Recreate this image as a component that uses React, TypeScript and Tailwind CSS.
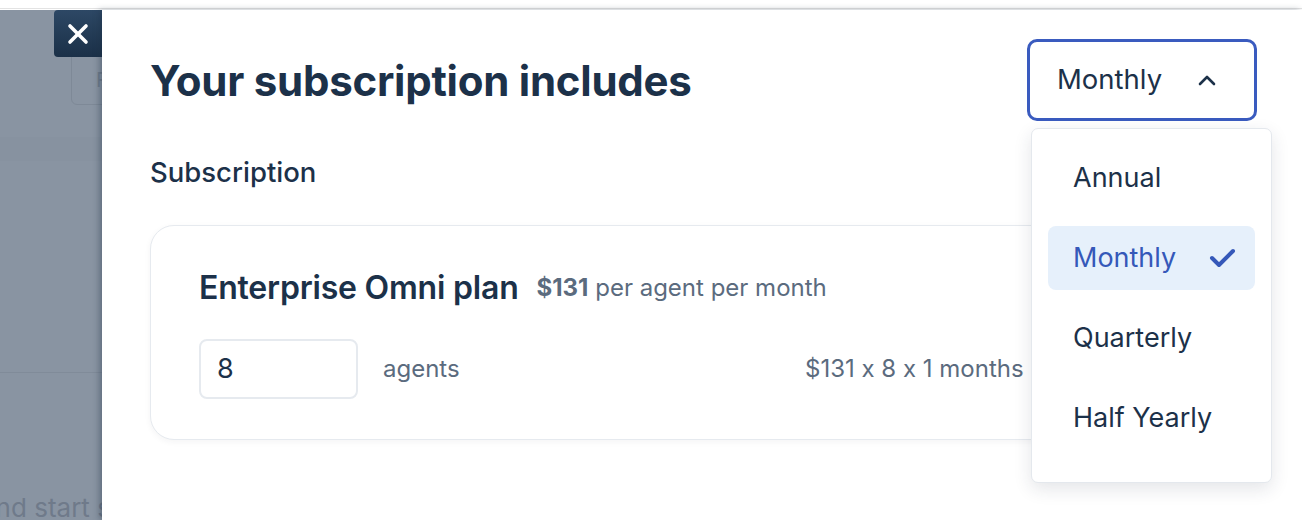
import React from 'react';

const options = ['Annual', 'Monthly', 'Quarterly', 'Half Yearly'];

const CheckIcon = () => (
    <svg width="27" height="20" viewBox="0 0 27 20" fill="none" stroke="currentColor" strokeWidth="4" strokeLinecap="round" strokeLinejoin="round">
        <polyline points="3,10 10,17 24,3" />
    </svg>
);

const ChevronUp = () => (
    <svg width="18" height="11" viewBox="0 0 18 11" fill="none" stroke="currentColor" strokeWidth="2.6" strokeLinecap="round" strokeLinejoin="round">
        <polyline points="2,9 9,2 16,9" />
    </svg>
);

const CloseIcon = () => (
    <svg width="22" height="22" viewBox="0 0 22 22" fill="none" stroke="currentColor" strokeWidth="3.6" strokeLinecap="round">
        <line x1="3" y1="3" x2="19" y2="19" />
        <line x1="19" y1="3" x2="3" y2="19" />
    </svg>
);

const App: React.FC = () => {
    const selected = 'Monthly';

    return (
        <div className="w-[1302px] h-[520px] overflow-hidden bg-white font-['Inter',sans-serif] text-[#1c3149] [font-feature-settings:'calt'_0]">
            <div className="h-[10px] bg-white">
                <div className="h-[9px] border-b border-[#e3e3e3]" />
            </div>

            <div className="flex h-[510px]">
                {/* dimmed page behind the drawer */}
                <div className="relative w-[102px] shrink-0 overflow-hidden bg-[#8994a2]">
                    <div className="absolute left-[71px] top-[30px] w-[70px] h-[65px] rounded-[6px] border border-[#7e8997] pl-[24px] pt-[24px] text-[20px] text-[#717d8c]">
                        F
                    </div>
                    <div className="absolute left-0 right-0 top-[127px] h-[24px] bg-[#8792a0]" />
                    <div className="absolute left-0 right-0 top-[362px] h-px bg-[#808b99]" />
                    <div className="absolute left-[-19px] top-[478px] whitespace-nowrap text-[26px] text-[#6f7a8a]">
                        and start selling
                    </div>
                    <button className="absolute right-0 top-0 w-[48px] h-[47px] rounded-l-[4px] bg-gradient-to-b from-[#2d4865] to-[#1b3048] flex items-center justify-center text-white">
                        <CloseIcon />
                    </button>
                </div>

                {/* drawer */}
                <div className="relative flex-1 bg-white pl-[48px] pr-[45px] shadow-[-3px_0_6px_rgba(30,45,65,0.35)]">
                    <div className="flex items-center justify-between mt-[29px]">
                        <h1 className="text-[42px] leading-none font-bold tracking-[-0.25px] mt-[2px]">Your subscription includes</h1>

                        <div className="relative">
                            <button className="w-[230px] h-[82px] rounded-[10px] border-[3px] border-[#3a5bbf] bg-white pl-[27px] pr-[38px] flex items-center justify-between text-[27.5px] text-[#1c3149]">
                                <span>Monthly</span>
                                <ChevronUp />
                            </button>

                            <div className="absolute left-[4px] top-[calc(100%+7px)] w-[241px] h-[355px] rounded-[7px] border border-[#e4e8ed] bg-white px-[16px] pt-[17px] shadow-[0_6px_18px_rgba(30,45,65,0.12)] z-10">
                                <ul className="flex flex-col gap-[16px]">
                                    {options.map(opt => {
                                        const active = opt === selected;
                                        return (
                                            <li
                                                key={opt}
                                                className={
                                                    active
                                                        ? 'h-[64px] rounded-[8px] bg-[#e6f0fb] pl-[25px] pr-[19px] flex items-center justify-between text-[27px] text-[#3558b9]'
                                                        : 'h-[64px] rounded-[8px] pl-[25px] pr-[19px] flex items-center text-[27px] text-[#1c3149]'
                                                }
                                            >
                                                <span>{opt}</span>
                                                {active && <CheckIcon />}
                                            </li>
                                        );
                                    })}
                                </ul>
                            </div>
                        </div>
                    </div>

                    <h2 className="mt-[35px] text-[27.5px] leading-[32px] font-medium">Subscription</h2>

                    <div className="mt-[37px] rounded-[24px] border border-[#e6eaef] bg-white px-[48px] pt-[43px] pb-[40px] shadow-[0_2px_6px_rgba(30,45,65,0.05)]">
                        <div className="flex items-center">
                            <span className="text-[32px] leading-[38px] font-semibold tracking-[-0.2px]">Enterprise Omni plan</span>
                            <span className="ml-[18px] text-[24px] text-[#5b6b7e]">
                                <span className="font-bold">$131</span> per agent per month
                            </span>
                        </div>

                        <div className="mt-[32px] flex items-center">
                            <div className="w-[159px] h-[60px] rounded-[8px] border-2 border-[#e6eaef] pl-[16px] flex items-center text-[27px]">
                                8
                            </div>
                            <span className="ml-[25px] w-[422px] text-[24px] text-[#5b6b7e]">agents</span>
                            <span className="whitespace-nowrap text-[24px] text-[#5b6b7e]">$131 x 8 x 1 months = $1,048</span>
                        </div>
                    </div>
                </div>
            </div>
        </div>
    );
};

export default App;
